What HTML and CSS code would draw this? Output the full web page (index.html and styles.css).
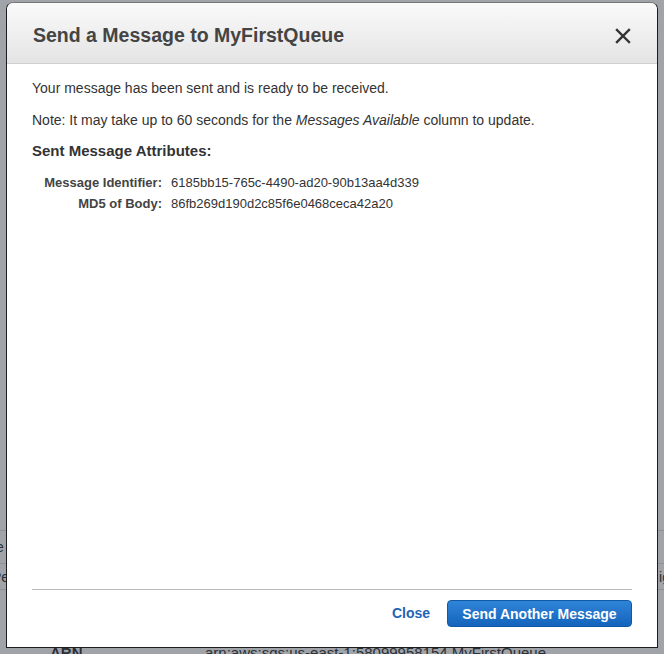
FILE: index.html
```html
<!DOCTYPE html>
<html>
<head>
<meta charset="utf-8">
<link rel="stylesheet" href="styles.css">
</head>
<body>
<div class="page">
  <div class="bg-spacer"></div>
  <div class="bg-row row-a"><span class="bg-left">te</span><span class="bg-right"></span></div>
  <div class="bg-row row-b"><span class="bg-left">Pe</span><span class="bg-right">ig</span></div>
  <div class="bg-arn"><span class="arn-label">ARN</span><span class="arn-value">arn:aws:sqs:us-east-1:58099958154&nbsp;MyFirstQueue</span></div>
</div>
<div class="modal">
  <div class="modal-header">
    <h1 class="modal-title">Send a Message to MyFirstQueue</h1>
    <svg class="close-x" width="16" height="16" viewBox="0 0 16 16"><path d="M2 2 L14 14 M14 2 L2 14" stroke="#333" stroke-width="2.4" stroke-linecap="square"/></svg>
  </div>
  <div class="modal-body">
    <p class="msg">Your message has been sent and is ready to be received.</p>
    <p class="msg note">Note: It may take up to 60 seconds for the <em>Messages Available</em> column to update.</p>
    <h2 class="attr-title">Sent Message Attributes:</h2>
    <div class="attrs">
      <div class="attr-label">Message Identifier:</div>
      <div class="attr-value">6185bb15-765c-4490-ad20-90b13aa4d339</div>
      <div class="attr-label">MD5 of Body:</div>
      <div class="attr-value">86fb269d190d2c85f6e0468ceca42a20</div>
    </div>
  </div>
  <div class="modal-footer">
    <a class="link-btn">Close</a>
    <button class="primary-btn">Send Another Message</button>
  </div>
</div>
</body>
</html>
```
FILE: styles.css
```css
html, body {
  margin: 0;
  padding: 0;
}
body {
  width: 664px;
  height: 654px;
  overflow: hidden;
  background: #a0a4a9;
  font-family: "Liberation Sans", Arial, sans-serif;
  position: relative;
}
.page {
  display: flex;
  flex-direction: column;
  color: #2c3036;
  font-size: 14px;
}
.bg-spacer {
  height: 530px;
}
.bg-row {
  box-sizing: border-box;
  border-top: 1px solid #8f9398;
  display: flex;
  align-items: center;
  justify-content: space-between;
}
.row-a {
  height: 33px;
}
.row-b {
  height: 26px;
}
.bg-left {
  margin-left: -8px;
}
.bg-right {
  margin-right: -6px;
}
.bg-arn {
  border-top: 1px solid #8f9398;
  padding-top: 54px;
  display: flex;
  font-size: 15px;
  line-height: 17px;
}
.arn-label {
  margin-left: 50px;
  width: 155px;
  font-weight: bold;
}
.modal {
  position: absolute;
  left: 6px;
  top: 2px;
  width: 650px;
  height: 644px;
  background: #fff;
  border: 1px solid #1c1c1c;
  border-top-color: #777;
  border-radius: 7px 7px 0 0;
  display: flex;
  flex-direction: column;
}
.modal-header {
  box-sizing: border-box;
  height: 61px;
  border-bottom: 1px solid #cfcfcf;
  border-radius: 7px 7px 0 0;
  background: linear-gradient(#fafafa, #e4e4e4);
  display: flex;
  align-items: center;
  justify-content: space-between;
  padding: 5px 26px 0 26px;
}
.modal-title {
  margin: 0;
  font-size: 19.5px;
  font-weight: bold;
  color: #444;
}
.close-x {
  display: block;
}
.modal-body {
  flex: 1;
  padding: 15px 25px 0 25px;
  color: #333;
}
.msg {
  margin: 0 0 14px 0;
  font-size: 14px;
  line-height: 18px;
}
.msg.note {
  margin-bottom: 12px;
}
.attr-title {
  margin: 0 0 14px 0;
  font-size: 15px;
  line-height: 20px;
  font-weight: bold;
  color: #333;
}
.attrs {
  display: grid;
  grid-template-columns: 130px auto;
  column-gap: 9px;
  row-gap: 5px;
  font-size: 13px;
  line-height: 16px;
}
.attr-label {
  text-align: right;
  font-weight: bold;
  color: #444;
}
.attr-value {
  color: #333;
}
.modal-footer {
  margin: 0 25px;
  border-top: 1px solid #bbb;
  height: 58px;
  box-sizing: border-box;
  padding-top: 10px;
  display: flex;
  align-items: flex-start;
  justify-content: flex-end;
  gap: 17px;
}
.link-btn {
  color: #1f64b5;
  font-weight: bold;
  font-size: 14px;
  line-height: 27px;
}
.primary-btn {
  height: 27px;
  width: 185px;
  border: 1px solid #0f5aa8;
  border-radius: 4px;
  background: linear-gradient(#2f84d8, #1464bb);
  color: #fff;
  font-family: "Liberation Sans", Arial, sans-serif;
  font-size: 14px;
  font-weight: bold;
  padding: 0;
}
```
